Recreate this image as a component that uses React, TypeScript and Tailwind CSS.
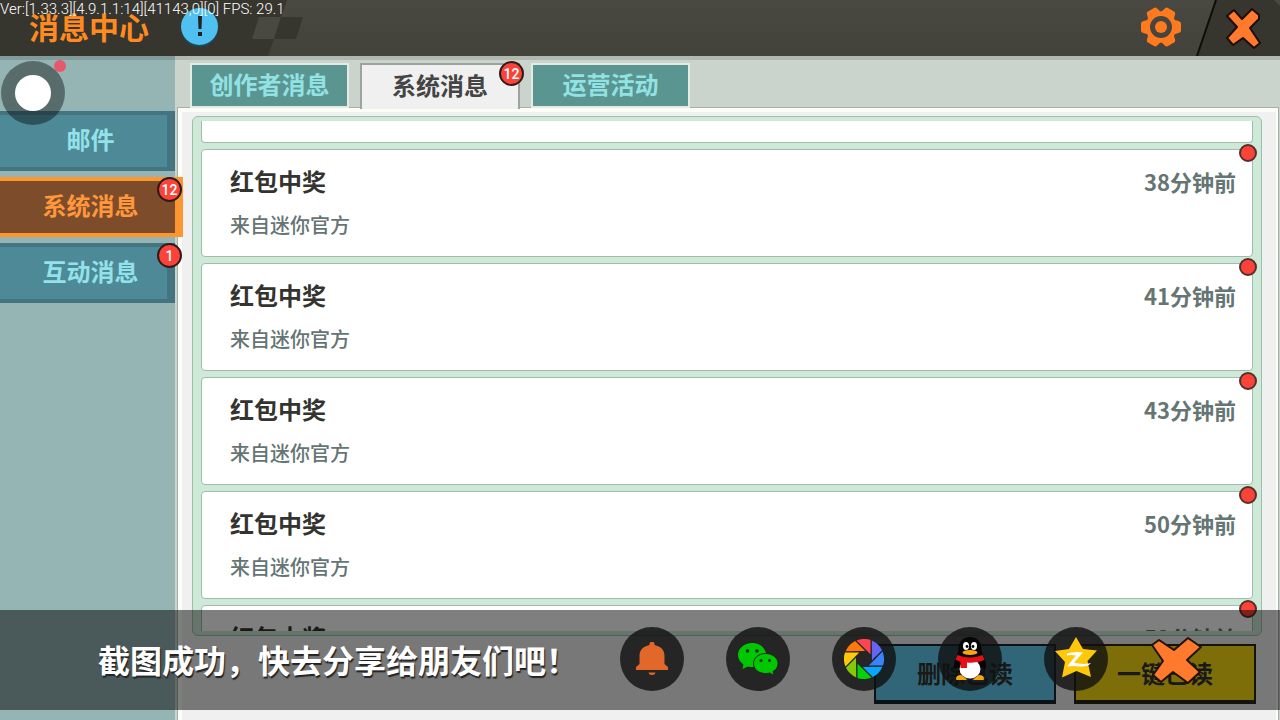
import React from "react";

const font = "font-['Noto_Sans_CJK_SC','Noto_Sans',sans-serif]";

function Badge({ children }: { children: React.ReactNode }) {
  return (
    <span className="flex size-[25px] items-center justify-center rounded-full border-2 border-[#301a1a] bg-[#fb4339] font-['Roboto','Noto_Sans_CJK_SC',sans-serif] text-sm leading-none font-medium text-white">
      {children}
    </span>
  );
}

function CloseIcon() {
  return (
    <svg viewBox="0 0 37 43" className="h-[43px] w-[37px]" aria-hidden="true">
      <path
        d="M2 9L9 3L17 12L27 2L34 8V12L25 21L35 36L29 41L18 31L8 38L2 31L12 20Z"
        fill="#ff7a2c"
        stroke="#1c0e0a"
        strokeWidth="2"
        strokeLinejoin="round"
      />
    </svg>
  );
}

function WideCloseIcon() {
  return (
    <svg viewBox="0 0 53 50" className="h-[50px] w-[53px]" aria-hidden="true">
      <path
        d="M2 9L9 4L24 14L38 2L51 11L37 24L50 36L38 47L23 36L11 46L3 39L13 25Z"
        fill="#ff7a2c"
        stroke="#22120c"
        strokeWidth="2"
        strokeLinejoin="round"
      />
    </svg>
  );
}

function Gear() {
  const teeth = [0, 60, 120, 180, 240, 300];
  return (
    <svg viewBox="-20 -20 40 40" className="size-10" aria-hidden="true">
      <g fill="#ff7a1f">
        {teeth.map((a) => (
          <path
            key={a}
            transform={`rotate(${a + 30})`}
            d="M-8.500 -12Q-6.500 -14 -6 -17.500Q-5.500 -20 -3.500 -20H3.500Q5.500 -20 6 -17.500Q6.500 -14 8.500 -12Z"
          />
        ))}
        <path
          fillRule="evenodd"
          d="M0 -15A15 15 0 1 0 0 15A15 15 0 1 0 0 -15ZM0 -11A11 11 0 1 1 0 11A11 11 0 1 1 0 -11Z"
        />
        <circle r="6" />
      </g>
    </svg>
  );
}

function Bell() {
  return (
    <svg viewBox="0 0 32 34" className="h-[34px] w-8" aria-hidden="true">
      <path
        fill="#e2672a"
        d="M13.500 3A2.600 2.600 0 1 1 18.500 3C25 4.500 28.500 8 28.500 14V22L32 25V28H0V25L3.500 22V14C3.500 8 7 4.500 13.500 3ZM12.500 30.500H19.500Q19 33 16 33T12.500 30.500Z"
      />
    </svg>
  );
}

function WeChat() {
  return (
    <svg viewBox="0 0 40 34" className="h-[34px] w-10" aria-hidden="true">
      <path fill="#00c800" d="M14 1C6.500 1 0 6 0 13C0 17 2 20 5.500 22.500L4.500 27L10 24.500Q12 25 15 25C22 25 28 20 28 13C28 6 22 1 14 1Z" />
      <path
        fill="#00c800"
        stroke="#242424"
        strokeWidth="1"
        d="M27.500 11.500C20.500 11.500 15.500 16 15.500 21.500C15.500 27.500 21 31.500 27.500 31.500Q30 31.500 32 31L36 33.500L35 29.500C38.500 27.500 40 25 40 21.500C40 16 34.500 11.500 27.500 11.500Z"
      />
      <g fill="#242424">
        <circle cx="9.500" cy="9" r="1.800" />
        <circle cx="19" cy="9" r="1.800" />
        <circle cx="23" cy="18.500" r="1.500" />
        <circle cx="31.500" cy="18.500" r="1.500" />
      </g>
    </svg>
  );
}

function Aperture() {
  const blades = ["#ff4550", "#6464f5", "#3c82fa", "#0aa5ff", "#05d20a", "#87c80a", "#ffc80a", "#ff780a"];
  return (
    <svg viewBox="-20 -20 40 40" className="size-10" aria-hidden="true">
      {blades.map((c, i) => (
        <path key={c} transform={`rotate(${i * 45})`} fill={c} d="M-7.500 -18.500A20 20 0 0 1 6.500 -19V-4.800Z" />
      ))}
    </svg>
  );
}

function Penguin() {
  return (
    <svg viewBox="0 0 34 44" className="h-11 w-[34px]" aria-hidden="true">
      <path fill="#050505" d="M17 0C9 0 5 6 5.500 14L3 21C0 27 1 32 2 32C4 32 5 29 5 29C6 38 11 41 17 41S28 38 29 29C29 29 30 32 32 32C33 32 34 27 31 21L28.500 14C29 6 25 0 17 0Z" />
      <ellipse cx="17" cy="32" rx="10.500" ry="9.500" fill="#fff" />
      <path fill="#faa50a" d="M3 42Q3 38 8 38Q13 41 14 43H4Q3 43 3 42ZM31 42Q31 38 26 38Q21 41 20 43H30Q31 43 31 42Z" />
      <ellipse cx="13" cy="9" rx="3" ry="4" fill="#fff" />
      <ellipse cx="21" cy="9" rx="3" ry="4" fill="#fff" />
      <circle cx="14" cy="9.500" r="1.400" />
      <circle cx="20" cy="9.500" r="1.400" />
      <ellipse cx="17" cy="15.500" rx="7.500" ry="2.500" fill="#faa50a" />
      <path fill="#e60f14" d="M4.500 18Q17 23 29.500 18L31.500 23Q23 26.500 14 25.500V31H7.500V25L2.500 22.500Z" />
    </svg>
  );
}

function Star() {
  return (
    <svg viewBox="0 0 42 44" className="h-11 w-[42px]" aria-hidden="true">
      <path fill="#ffc80a" d="M21 0L28 12L42 13.500L32.500 24L36 40L21.500 34L7 40.500L10 25L0 14L14 12Z" />
      <path fill="#fff" d="M12 16.500Q19 14 28 15.500L19 25.500Q28 28 36 26Q33 30 25 29.500Q18 28.500 12 29.500L21 18.500Q16 17.500 12 18.500Z" />
    </svg>
  );
}

const sideTabs = [
  { label: "邮件" },
  { label: "系统消息", count: 12, active: true },
  { label: "互动消息", count: 1 },
];

const topTabs = [
  { label: "创作者消息" },
  { label: "系统消息", count: 12, active: true },
  { label: "运营活动" },
];

const messages = ["38分钟前", "41分钟前", "43分钟前", "50分钟前", "52分钟前"];

const shares = [
  { label: "提醒", icon: <Bell /> },
  { label: "微信", icon: <WeChat /> },
  { label: "朋友圈", icon: <Aperture /> },
  { label: "QQ", icon: <Penguin /> },
  { label: "QQ空间", icon: <Star /> },
];

function Header() {
  return (
    <header className="relative flex h-14 shrink-0 items-stretch bg-linear-to-b from-[#494942] to-[#42423a]">
      <svg viewBox="0 0 310 56" className="absolute top-0 left-0 h-14 w-[310px]" aria-hidden="true">
        <path d="M0 0H287L268 56H0Z" fill="#36352e" />
        <path d="M259 17H281L274 39H252Z" fill="#494942" />
        <path d="M281 17H303L296 39H274Z" fill="#36352e" />
      </svg>
      <div className="relative flex flex-1 items-center pb-1 pl-[29px]">
        <h1 className="w-[152px] text-3xl leading-none font-bold text-[#ff8a1f]">消息中心</h1>
        <button
          aria-label="说明"
          className="flex size-[37px] items-center justify-center rounded-full bg-[#4fc0f0] shadow-[0_2px_1px_#1c4a5c]"
        >
          <svg viewBox="0 0 8 20" className="h-5 w-2" aria-hidden="true">
            <path d="M2 0H6L5.500 13H2.500ZM2 16H6V20H2Z" fill="#222" />
          </svg>
        </button>
      </div>
      <button aria-label="设置" className="mr-[15px] flex items-center pb-0.5">
        <Gear />
      </button>
      <button aria-label="关闭" className="relative flex w-[84px] items-center justify-center">
        <svg viewBox="0 0 84 56" className="absolute inset-0 size-full" aria-hidden="true">
          <path d="M20 0H78L84 6V56H1Z" fill="#36352e" />
          <path d="M20 0L1 56" stroke="#0d0d0b" strokeWidth="2" />
        </svg>
        <span className="relative ml-2.5">
          <CloseIcon />
        </span>
      </button>
      <p className="absolute top-0 left-0 font-['Roboto',sans-serif] text-[15px] leading-[18px] font-light whitespace-nowrap text-white">
        Ver:[1.33.3][4.9.1.1:14][41143,0][0] FPS: 29.1
      </p>
    </header>
  );
}

function Sidebar() {
  return (
    <nav className="relative z-10 w-[175px] shrink-0 border-t-4 border-[#809b9a] bg-[#94b5b4] pt-[51px]">
      <ul className="flex flex-col gap-1.5">
        {sideTabs.map((t) => (
          <li key={t.label} className="relative">
            <button
              className={
                t.active
                  ? "h-15 w-[183px] border-y-4 border-r-8 border-[#fd962f] bg-[#7c4c2b] pb-1 pl-1.5 text-2xl font-bold text-[#ff983c]"
                  : "h-15 w-full border-y-4 border-r-8 border-[#437480] bg-[#4e8997] pb-1 pl-3.5 text-2xl font-bold text-[#93e2e9]"
              }
            >
              {t.label}
            </button>
            {t.count && (
              <span className="absolute top-0 left-[157px]">
                <Badge>{t.count}</Badge>
              </span>
            )}
          </li>
        ))}
      </ul>
      <button aria-label="悬浮菜单" className="absolute top-px left-px flex size-16 items-center justify-center rounded-full bg-black/40">
        <span className="size-9 rounded-full bg-white" />
        <span className="absolute -top-px -right-px size-3 rounded-full bg-[#e8586c]" />
      </button>
    </nav>
  );
}

function TopTabs() {
  return (
    <div className="relative z-10 flex h-[52px] shrink-0 items-end gap-[11px] border-t-4 border-[#b0b8b0] pl-[15px]">
      {topTabs.map((t) => (
        <div key={t.label} className="relative">
          <button
            className={
              t.active
                ? "-mb-px block h-[46px] w-40 border-2 border-b-0 border-[#9aa39c] bg-[#f0f0f0] pb-1 text-2xl font-bold text-[#444]"
                : "block h-[45px] w-[159px] border-2 border-[#e3ebe3] bg-[#5b9591] pb-1 text-2xl font-bold text-[#93e2e3]"
            }
          >
            {t.label}
          </button>
          {t.count && (
            <span className="absolute -top-0.5 -right-1">
              <Badge>{t.count}</Badge>
            </span>
          )}
        </div>
      ))}
    </div>
  );
}

function MessageList() {
  return (
    <div className="min-h-0 flex-1 overflow-hidden rounded-md border border-[#9dbfaa] bg-[#cfe9d8] py-1">
      <div className="h-full overflow-hidden">
        <ul className="flex flex-col gap-1.5 px-2">
          <li className="h-[22px] shrink-0 rounded-b-sm border border-t-0 border-[#9fbcac] bg-white" />
          {messages.map((time) => (
            <li
              key={time}
              className="relative flex h-[108px] shrink-0 items-start justify-between rounded-sm border border-[#9fbcac] bg-white pt-[13px] pr-4 pl-7"
            >
              <div>
                <h2 className="text-2xl leading-9 font-bold text-[#333330]">红包中奖</h2>
                <p className="mt-2.5 text-xl leading-8 font-medium text-[#647573]">来自迷你官方</p>
              </div>
              <time className="text-[22px] leading-9 font-bold text-[#647573]">{time}</time>
              <span className="absolute -top-1.5 -right-[5px] size-[18px] rounded-full border-2 border-[#54302c] bg-[#fb4339]" />
            </li>
          ))}
        </ul>
      </div>
    </div>
  );
}

function ShareBar() {
  return (
    <section className="absolute inset-x-0 bottom-2.5 z-20 flex h-25 items-center bg-black/50 pr-[77px] pb-0.5 pl-[98px]">
      <p className="flex-1 text-[32px] leading-none font-bold whitespace-nowrap text-white [text-shadow:1px_2px_1px_#222]">
        截图成功，快去分享给朋友们吧！
      </p>
      <div className="flex items-center gap-[42px]">
        {shares.map((s) => (
          <button key={s.label} aria-label={s.label} className="flex size-16 items-center justify-center rounded-full bg-[#101010]/80">
            {s.icon}
          </button>
        ))}
        <button aria-label="关闭分享" className="pt-1">
          <WideCloseIcon />
        </button>
      </div>
    </section>
  );
}

export default function App() {
  return (
    <div className={`relative flex h-screen flex-col overflow-hidden bg-[#cbd4cc] ${font}`}>
      <Header />
      <div className="flex min-h-0 flex-1">
        <Sidebar />
        <main className="flex min-w-0 flex-1 flex-col">
          <TopTabs />
          <div className="mr-0.5 ml-[3px] flex min-h-0 flex-1 flex-col border-t-4 border-r-2 border-l-4 border-[#fdfdf8] bg-[#f0f0f0] pt-1 pr-3.5 pb-4 pl-2.5 outline outline-[#a5b0a8]">
            <MessageList />
            <div className="mt-2 mr-1.5 flex shrink-0 justify-end gap-[18px]">
              <button className="h-[60px] w-[182px] border-2 border-b-4 border-[#17242b] bg-[#62cdf0] text-2xl font-bold text-[#333]">
                删除已读
              </button>
              <button className="h-[60px] w-[182px] border-2 border-b-4 border-[#292614] bg-[#fbdc12] text-2xl font-bold text-[#333]">
                一键已读
              </button>
            </div>
          </div>
        </main>
      </div>
      <ShareBar />
    </div>
  );
}
